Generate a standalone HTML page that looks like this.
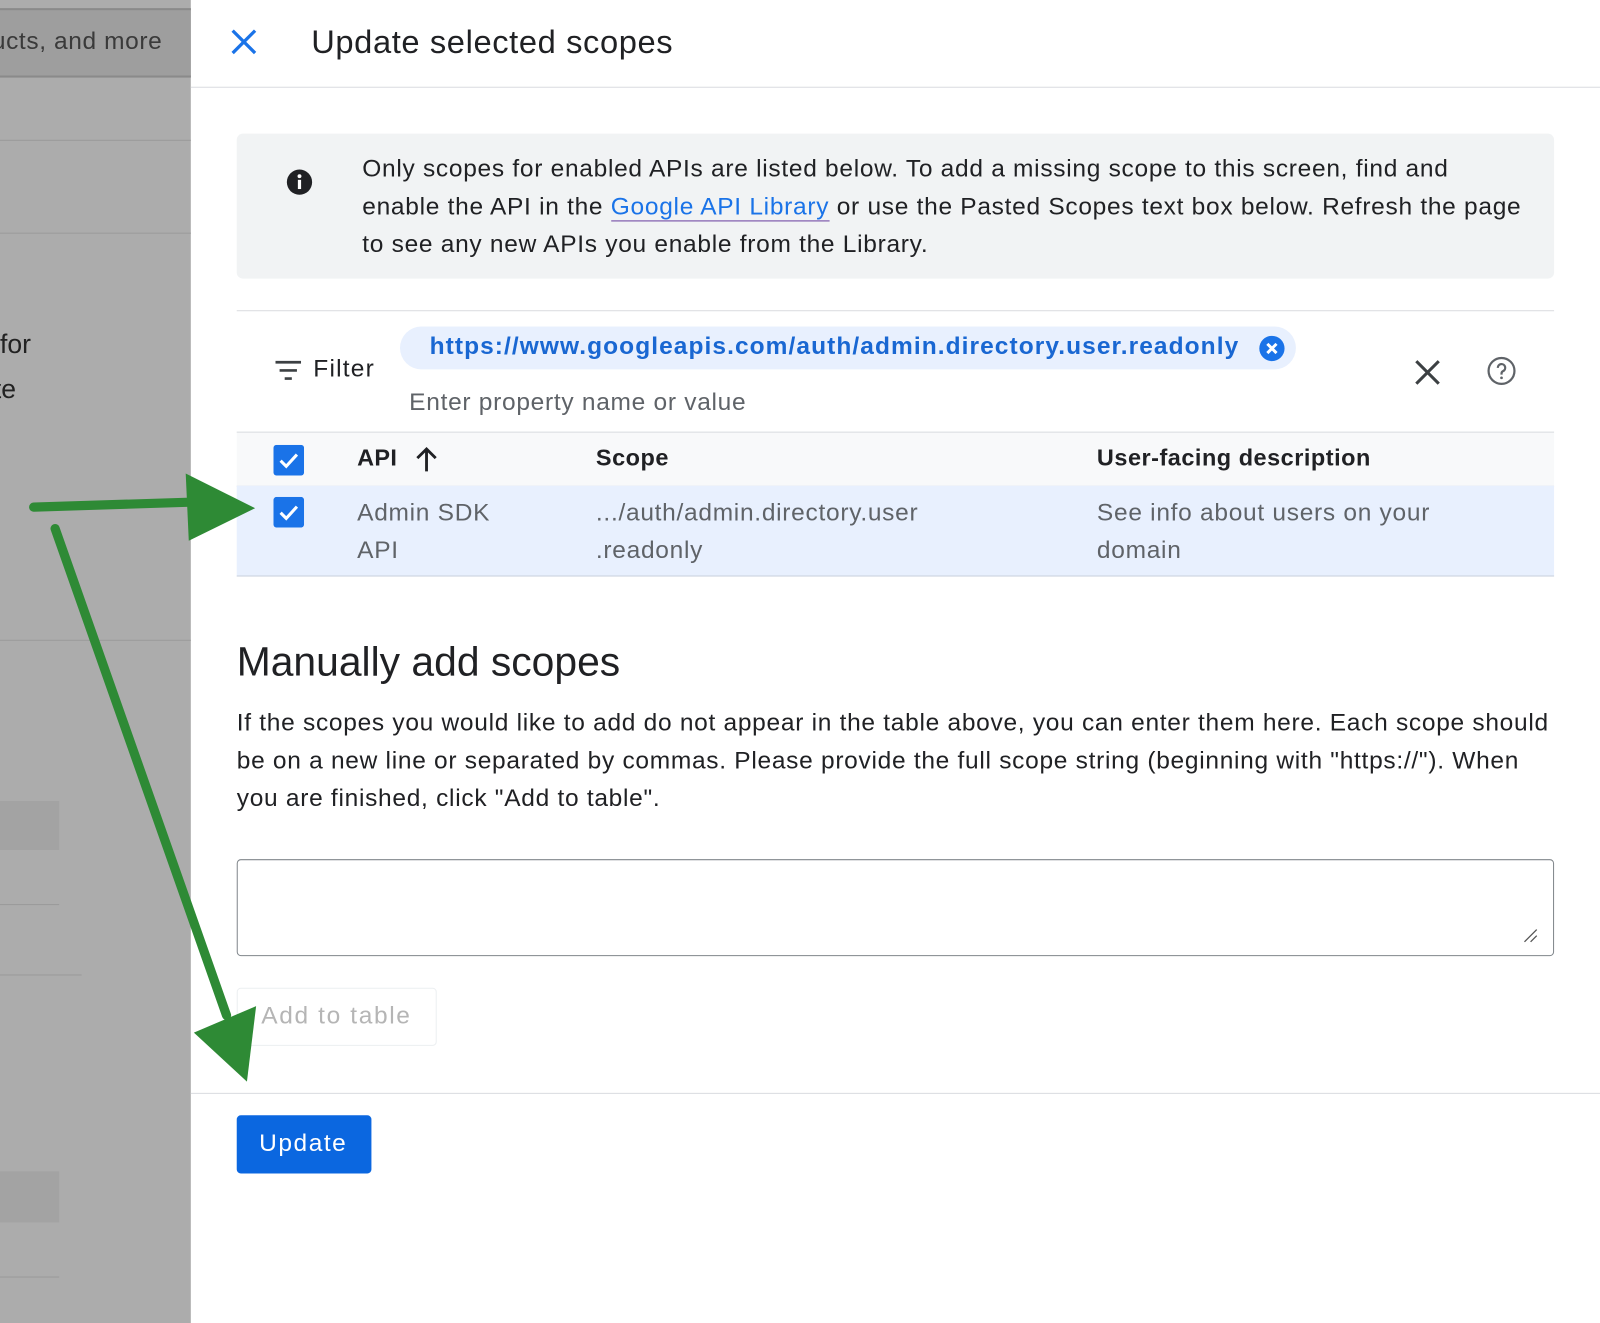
<!DOCTYPE html>
<html><head><meta charset="utf-8"><style>
html,body{margin:0;padding:0;width:1600px;height:1323px;overflow:hidden;background:#fff;font-family:"Liberation Sans",Arial,sans-serif;}
#w{position:absolute;left:0;top:0;width:1568px;height:1297px;transform:scale(1.0204);transform-origin:0 0;}
.a{position:absolute;white-space:nowrap;}
.t{font-size:24px;color:#202124;letter-spacing:0.7px;}
</style></head><body><div id="w">
<!-- sidebar -->
<div class="a" style="left:0;top:0;width:187px;height:1297px;background:#acacac"></div>
<div class="a" style="left:0;top:8px;width:187px;height:64px;background:#9e9e9e;border-top:2px solid #8a8a8a;border-bottom:2px solid #8a8a8a"></div>
<div class="a" style="left:-8px;top:27px;font-size:24px;color:#3a3a3a;letter-spacing:0.6px">ucts, and more</div>
<div class="a" style="left:0;top:137px;width:187px;height:1px;background:#9a9a9a"></div>
<div class="a" style="left:0;top:228px;width:187px;height:1px;background:#9a9a9a"></div>
<div class="a" style="left:0;top:627px;width:187px;height:1px;background:#9a9a9a"></div>
<div class="a" style="left:0;top:322px;font-size:26px;color:#222">for</div>
<div class="a" style="left:-6px;top:366px;font-size:26px;color:#222">te</div>
<div class="a" style="left:0;top:785px;width:58px;height:48px;background:#a3a3a3"></div>
<div class="a" style="left:0;top:886px;width:58px;height:1px;background:#9a9a9a"></div>
<div class="a" style="left:0;top:955px;width:80px;height:1px;background:#9a9a9a"></div>
<div class="a" style="left:0;top:1148px;width:58px;height:50px;background:#a3a3a3"></div>
<div class="a" style="left:0;top:1251px;width:58px;height:1px;background:#9a9a9a"></div>
<!-- header -->
<svg class="a" style="left:225px;top:27px" width="28" height="28" viewBox="0 0 28 28"><path d="M3 3L25 25M25 3L3 25" stroke="#1a73e8" stroke-width="3.2"/></svg>
<div class="a" style="left:305px;top:23px;font-size:32px;color:#202124;letter-spacing:0.6px">Update selected scopes</div>
<div class="a" style="left:187px;top:85px;width:1381px;height:1px;background:#dadce0"></div>
<!-- info -->
<div class="a" style="left:232px;top:131px;width:1291px;height:142px;background:#f1f3f4;border-radius:6px"></div>
<svg class="a" style="left:280px;top:165px" width="27" height="27" viewBox="0 0 24 24"><circle cx="12" cy="12" r="11" fill="#202124"/><rect x="10.6" y="10" width="2.8" height="8" fill="#fff"/><circle cx="12" cy="6.8" r="1.7" fill="#fff"/></svg>
<div class="a t" style="left:355px;top:147px;line-height:37px">Only scopes for enabled APIs are listed below. To add a missing scope to this screen, find and<br>enable the API in the <span style="color:#1a73e8;border-bottom:1.5px solid #6b3fa0">Google API Library</span> or use the Pasted Scopes text box below. Refresh the page<br>to see any new APIs you enable from the Library.</div>
<div class="a" style="left:232px;top:304px;width:1291px;height:1px;background:#dadce0"></div>
<!-- filter -->
<svg class="a" style="left:269px;top:352px" width="27" height="22" viewBox="0 0 27 22"><path d="M1 3H26M5 11H22M10 19H17" stroke="#3c4043" stroke-width="2.6"/></svg>
<div class="a t" style="left:307px;top:348px;letter-spacing:1.2px">Filter</div>
<div class="a" style="left:392px;top:320px;width:878px;height:42px;background:#e8f0fe;border-radius:21px"></div>
<div class="a" style="left:421px;top:326px;font-size:24px;color:#1967d2;font-weight:bold;letter-spacing:1.05px">https://www.googleapis.com/auth/admin.directory.user.readonly</div>
<svg class="a" style="left:1233px;top:328px" width="27" height="27" viewBox="0 0 24 24"><circle cx="12" cy="12" r="11" fill="#1a73e8"/><path d="M8 8L16 16M16 8L8 16" stroke="#fff" stroke-width="2.6"/></svg>
<div class="a t" style="left:401px;top:381px;color:#5f6368">Enter property name or value</div>
<svg class="a" style="left:1386px;top:352px" width="26" height="26" viewBox="0 0 26 26"><path d="M2 2L24 24M24 2L2 24" stroke="#3c4043" stroke-width="3"/></svg>
<svg class="a" style="left:1457px;top:349px" width="29" height="29" viewBox="0 0 24 24"><circle cx="12" cy="12" r="10.5" fill="none" stroke="#5f6368" stroke-width="1.8"/><path d="M9 9.5a3 3 0 1 1 4.2 2.7c-.8.4-1.2 1-1.2 2v.8" fill="none" stroke="#5f6368" stroke-width="1.8"/><circle cx="12" cy="17.6" r="1.1" fill="#5f6368"/></svg>
<!-- table -->
<div class="a" style="left:232px;top:423px;width:1291px;height:52px;background:#f8f9fa;border-top:1px solid #dadce0;border-bottom:1px solid #dadce0"></div>
<div class="a" style="left:232px;top:476px;width:1291px;height:88px;background:#e8f0fe;border-bottom:1px solid #c8d0dc"></div>
<svg class="a" style="left:268px;top:436px" width="30" height="30" viewBox="0 0 30 30"><rect width="30" height="30" rx="3" fill="#1a73e8"/><path d="M7 15.5L12.5 21L23 9.5" fill="none" stroke="#fff" stroke-width="3"/></svg>
<svg class="a" style="left:268px;top:487px" width="30" height="30" viewBox="0 0 30 30"><rect width="30" height="30" rx="3" fill="#1a73e8"/><path d="M7 15.5L12.5 21L23 9.5" fill="none" stroke="#fff" stroke-width="3"/></svg>
<div class="a t" style="left:350px;top:435px;font-weight:bold;font-size:23px;letter-spacing:0.3px">API</div>
<svg class="a" style="left:406px;top:437px" width="24" height="26" viewBox="0 0 24 26"><path d="M12 25V3M3 12L12 3L21 12" fill="none" stroke="#202124" stroke-width="2.8"/></svg>
<div class="a t" style="left:584px;top:435px;font-weight:bold;font-size:23px;letter-spacing:0.5px">Scope</div>
<div class="a t" style="left:1075px;top:435px;font-weight:bold;font-size:23px;letter-spacing:0.5px">User-facing description</div>
<div class="a t" style="left:350px;top:484px;line-height:37px;color:#5f6368">Admin SDK<br>API</div>
<div class="a t" style="left:584px;top:484px;line-height:37px;color:#5f6368">.../auth/admin.directory.user<br>.readonly</div>
<div class="a t" style="left:1075px;top:484px;line-height:37px;color:#5f6368">See info about users on your<br>domain</div>
<!-- manual -->
<div class="a" style="left:232px;top:627px;font-size:40px;color:#202124">Manually add scopes</div>
<div class="a t" style="left:232px;top:690px;line-height:37px">If the scopes you would like to add do not appear in the table above, you can enter them here. Each scope should<br>be on a new line or separated by commas. Please provide the full scope string (beginning with "https://"). When<br>you are finished, click "Add to table".</div>
<div class="a" style="left:232px;top:842px;width:1289px;height:93px;border:1px solid #80868b;border-radius:4px"></div>
<svg class="a" style="left:1492px;top:909px" width="16" height="16" viewBox="0 0 16 16"><path d="M2 14L14 2M8 14L14 8" stroke="#555" stroke-width="1.3"/></svg>
<div class="a" style="left:232px;top:968px;width:194px;height:55px;border:1px solid #eceff1;border-radius:4px"></div>
<div class="a" style="left:256px;top:982px;font-size:24px;color:#b5b5b5;letter-spacing:1.6px">Add to table</div>
<div class="a" style="left:187px;top:1071px;width:1381px;height:1px;background:#dadce0"></div>
<div class="a" style="left:232px;top:1093px;width:132px;height:57px;background:#0b67e0;border-radius:4px"></div>
<div class="a" style="left:254px;top:1107px;font-size:24px;color:#fff;letter-spacing:1.5px">Update</div>
<!-- arrows -->
<svg class="a" style="left:0;top:0" width="400" height="1100" viewBox="0 0 400 1100">
<path d="M33 497L190 492" stroke="#2e8a35" stroke-width="9" stroke-linecap="round"/>
<path d="M250 498L182 464L185 530Z" fill="#2e8a35"/>
<path d="M54 518L222 995" stroke="#2e8a35" stroke-width="9" stroke-linecap="round"/>
<path d="M242 1060L190 1012L251 986Z" fill="#2e8a35"/>
</svg>
</div></body></html>
